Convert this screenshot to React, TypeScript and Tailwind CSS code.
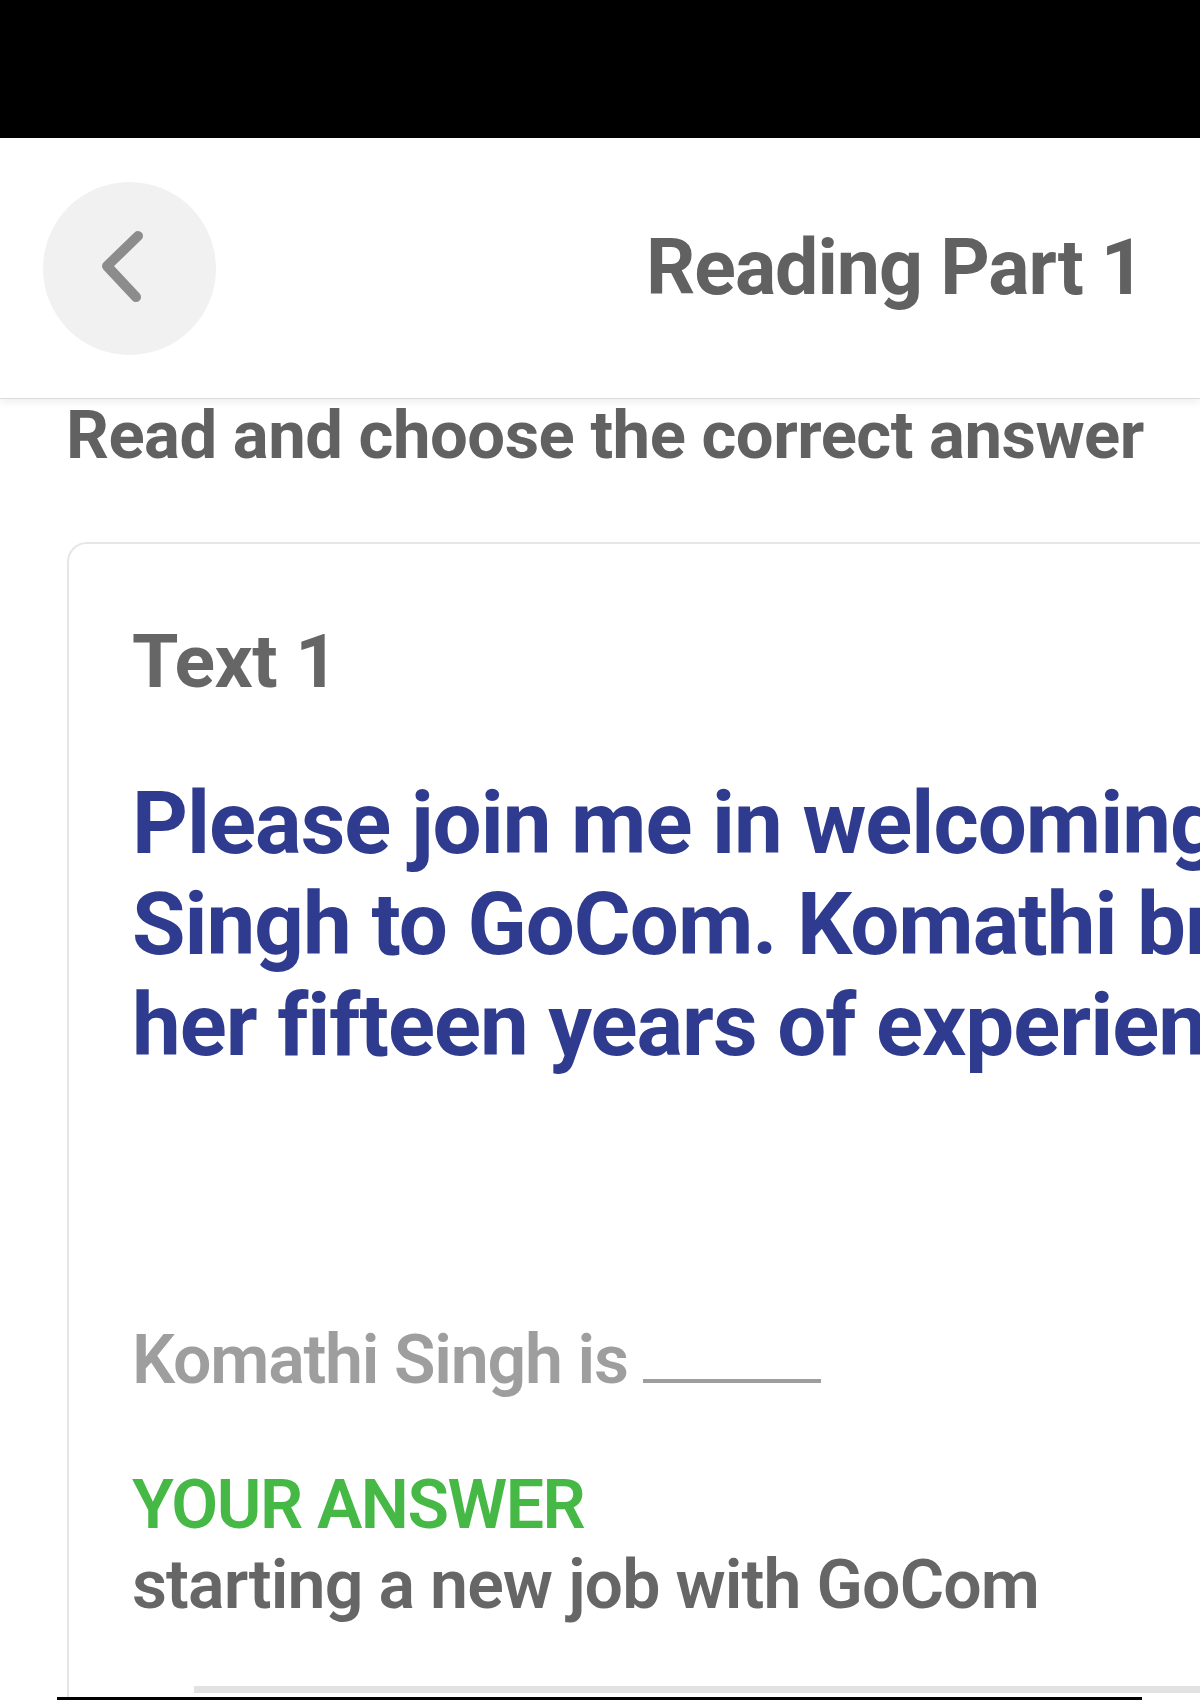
export default function App() {
  return (
    <div className="relative h-[1700px] w-[1200px] overflow-hidden bg-white font-['Roboto','Liberation_Sans',sans-serif]">
      <div className="h-[138px] bg-black" />

      {/* top bar */}
      <header className="flex h-[261px] items-center border-b border-[#dcdcdc] shadow-[0_3px_8px_rgba(0,0,0,0.07)]">
        <button className="ml-[43px] h-[173px] w-[173px] shrink-0 rounded-full bg-[#f1f1f1]">
          <svg viewBox="0 0 173 173" className="h-full w-full">
            <path
              d="M95 54 L64 84 L93 115"
              fill="none"
              stroke="#8c8c8c"
              strokeWidth="10"
              strokeLinecap="round"
              strokeLinejoin="round"
            />
          </svg>
        </button>
        <h1 className="ml-[430px] whitespace-nowrap text-[77px] font-bold leading-[90px] tracking-[-1px] text-[#616161]">
          Reading Part 1
        </h1>
      </header>

      <p className="ml-[66px] mt-[3px] whitespace-nowrap text-[67px] font-bold leading-[67px] tracking-[-0.5px] text-[#616161]">
        Read and choose the correct answer
      </p>

      {/* question card */}
      <section className="ml-[67px] mt-[73px] h-[1200px] w-[1300px] rounded-tl-[20px] border-l-2 border-t-2 border-[#e6e6e6] pl-[63px] pt-[80px]">
        <h2 className="text-[75px] font-bold leading-[75px] tracking-[-0.5px] text-[#666666]">Text 1</h2>

        <div className="mt-[74px] whitespace-nowrap text-[87px] font-bold leading-[101px] tracking-[-1px] text-[#2e3b8e]">
          <p>Please join me in welcoming Komathi</p>
          <p>Singh to GoCom. Komathi brings</p>
          <p>her fifteen years of experience</p>
        </div>

        <p className="mt-[250px] whitespace-nowrap text-[68px] font-semibold leading-[68px] tracking-[-1.2px] text-[#9e9e9e]">
          Komathi Singh is{' '}
          <span className="inline-block h-[4px] w-[178px] bg-[#9e9e9e] align-baseline" />
        </p>

        <p className="mt-[77px] text-[68px] font-semibold leading-[68px] tracking-[-1.5px] text-[#45b845]">
          YOUR ANSWER
        </p>
        <p className="mt-[12px] whitespace-nowrap text-[68px] font-semibold leading-[68px] tracking-[-0.9px] text-[#666666]">
          starting a new job with GoCom
        </p>
      </section>

      <div className="absolute left-[194px] top-[1686px] h-[7px] w-[1006px] bg-[#e2e2e2]" />
      <div className="absolute left-[57px] top-[1697px] h-[3px] w-[1085px] bg-black" />
    </div>
  );
}
